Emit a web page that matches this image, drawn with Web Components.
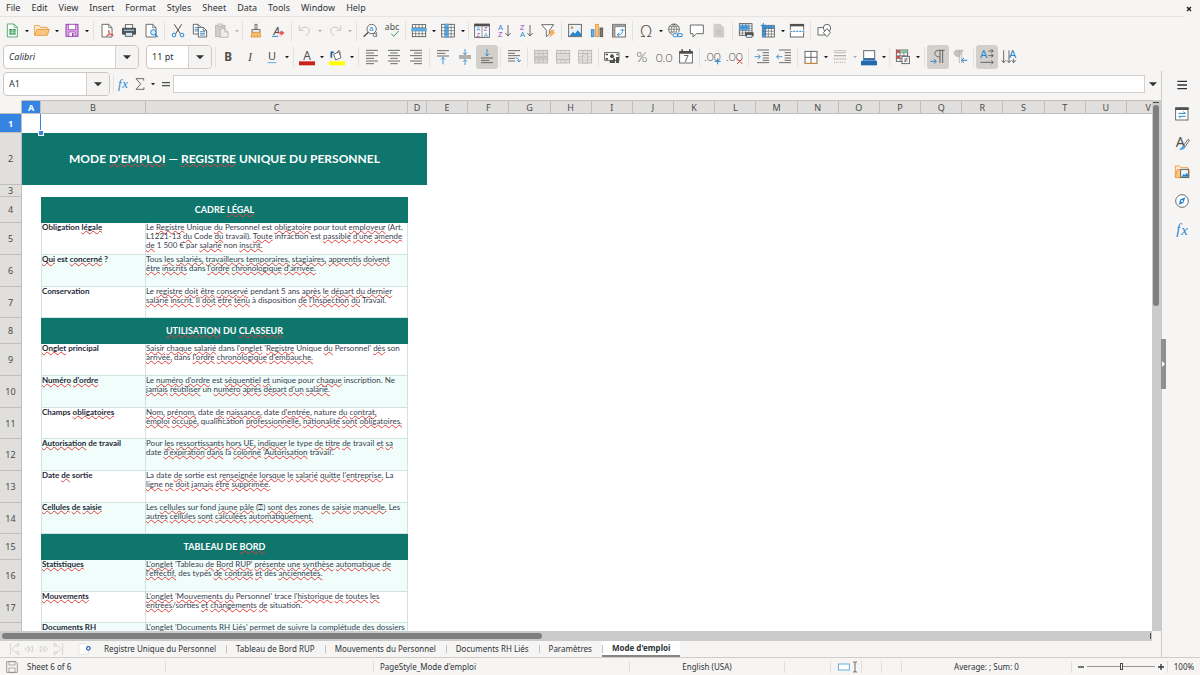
<!DOCTYPE html>
<html lang="en">
<head>
<meta charset="utf-8">
<title>Mode d'emploi — Calc</title>
<style>
  html, body { margin: 0; height: 100%; }
  body { font: 8px/12px "Noto Sans", sans-serif; color: #2e3436; background: #f6f5f4; overflow: hidden; }
</style>
</head>
<body>
<calc-app></calc-app>
<script>
const D = '#4f4f4d', B = '#2a86cc', O = '#e8912d', G = '#3c9d5a', R = '#d94a4a', P = '#9b45b0', L = '#b5b3b0';
const rect = (x, y, w, h, fill = 'none', stroke = D, sw = 2.5) =>
  `<rect x="${x}" y="${y}" width="${w}" height="${h}" fill="${fill}" stroke="${stroke}" stroke-width="${sw}"/>`;
const line = (d, stroke = D, sw = 3, fill = 'none') => `<path d="${d}" fill="${fill}" stroke="${stroke}" stroke-width="${sw}"/>`;
const txt = (s, x, y, size, fill = D, extra = 'font-family="Noto Sans, sans-serif"') =>
  `<text x="${x}" y="${y}" font-size="${size}" fill="${fill}" text-anchor="middle" ${extra}>${s}</text>`;
const doc = (x, y, w, h, stroke = D, fill = '#fff') =>
  line(`M${x} ${y}H${x + w - 10}L${x + w} ${y + 10}V${y + h}H${x}Z`, stroke, 2.5, fill) +
  line(`M${x + w - 10} ${y}V${y + 10}H${x + w}`, stroke, 2);
const table = (x, y, w, h, c, r, stroke = D, fill = '#fff') => {
  let d = '';
  for (let i = 1; i < c; i++) d += `M${x + w * i / c} ${y}V${y + h}`;
  for (let i = 1; i < r; i++) d += `M${x} ${y + h * i / r}H${x + w}`;
  return rect(x, y, w, h, fill, stroke, 2.5) + line(d, stroke, 1.8);
};
const rows = (ys, x1 = -18, x2 = 18, stroke = D) => line(ys.map(y => `M${x1} ${y}H${x2}`).join(''), stroke, 2.5);
const alignLines = (pairs) => line(pairs.map(([a, b], i) => `M${a} ${-20 + i * 8}H${b}`).join(''), D, 2.5);
const stack = (parts, size) => `<text font-size="${size}" text-anchor="middle" font-family="Liberation Sans, sans-serif">${parts.map(([s, x, y, c]) => `<tspan x="${x}" y="${y}" fill="${c}">${s}</tspan>`).join('')}</text>`;
const light = 'font-family="Lato, sans-serif" font-weight="300"';
const serif = 'font-family="Liberation Serif, serif" font-style="italic"';

const ICONS = {
  new: doc(-14, -21, 30, 39, G) + `<path d="M-8-6H11V11H-8Z" fill="${G}"/>` + line('M-8 0H11M-8 5H11M2-6V11', '#fff', 1.5),
  open: line('M-22 13V-16H-8L-4-11H15V-4', O, 2.5, '#fdf0dc') + line('M-22 13L-15-5H22L16 13Z', O, 2.5, '#f9c583'),
  save: rect(-18, -20, 36, 36, '#d9a3e3', P, 3) + rect(-11, -20, 22, 15, '#fff', P, 2) + rect(-9, 3, 18, 13, '#fff', P, 2) + `<path d="M0 6H5V16H0Z" fill="${P}"/>`,
  pdf: doc(-15, -20, 30, 38) + line('M-2 16C8 8 8-2 5-2C2-2 6 10 18 13C22 8 4 10-2 16Z', R, 3),
  print: rect(-11, -19, 22, 12, '#fff') + `<rect x="-21" y="-10" width="42" height="21" rx="3" fill="#55534f"/><path d="M-15-4H15V0H-15Z" fill="#8bc1ea"/>` + rect(-11, 4, 22, 12, '#cfe6f8'),
  preview: doc(-15, -20, 30, 38) + '<circle cx="7" cy="4" r="8" fill="#d5eafa" stroke="#2a86cc" stroke-width="3"/>' + line('M12 10L20 18', B, 4),
  cut: line('M-11-20L7 8M11-20L-7 8', D, 3) + `<circle cx="-12" cy="12" r="5.500" fill="none" stroke="${B}" stroke-width="3"/><circle cx="12" cy="12" r="5.500" fill="none" stroke="${B}" stroke-width="3"/>`,
  copy: doc(-20, -20, 24, 29) + rows([-10, -5, 0], -16, -2, B) + doc(-5, -11, 25, 29) + rows([2, 7, 12], 0, 15, B),
  paste: rect(-19, -17, 28, 34, '#cfcecc', L) + rect(-12, -21, 14, 7, '#dedddb', L, 2) + doc(-5, -7, 23, 26, L, '#ededeb'),
  clone: line('M-3-20H3V-4H-3Z', D, 2.5, '#fff') + rect(-12, -4, 24, 8, '#fff', D, 2.5) + line('M-12 4L-15 18H14L12 4Z', O, 2.5, '#f9c583') + line('M-5 8V18M4 8V18', O, 2),
  clear: txt('A', -4, 11, 34, D, 'font-family="Noto Sans, sans-serif" font-style="italic"') + line('M-18 16H0', B, 3) + line('M-2 12L10 0L18 5L6 17Z', R, 2, '#e65a5a') + line('M-4 12L2 7L10 13L6 18Z', '#fff', 1, '#fbe3e3'),
  undo: line('M-17-16V-2H-4M-16-3C-8-15 12-14 13-3C14 5 8 11 2 15', '#c3c1be', 2.5),
  redo: line('M17-16V-2H4M16-3C8-15-12-14-13-3C-14 5-8 11-2 15', '#c3c1be', 2.5),
  find: `<circle cx="5" cy="-6" r="14" fill="#fff" stroke="${D}" stroke-width="2.500"/>` + line('M-5 4L-19 17', D, 4) + stack([['a', 4, 0, B], ['d', 15, 19, D]], 24),
  spell: txt('abc', 0, -4, 26, D) + line('M-2 8L5 16L20 0', G, 3),
  row: table(-20, -19, 40, 36, 4, 4) + `<path d="M-23-9H23V1H-23Z" fill="#5ea9df"/>`,
  column: table(-19, -20, 38, 38, 4, 4) + `<path d="M-10-22H2V20H-10Z" fill="#5ea9df"/>` + line('M-10-10H2M-10 0H2M-10 9H2', '#2c6fa8', 1.5),
  sort: rect(-22, -20, 44, 39, '#fff') + `<path d="M-23-22H23V-14H-23Z" fill="${D}"/>` + line('M0-14V19', D, 2) + stack([['A', -11, 1, B], ['Z', -11, 17, P], ['Z', 11, 1, P], ['A', 11, 17, B]], 18),
  az: stack([['A', -11, -3, B], ['Z', -11, 18, P]], 22) + line('M12-18V14M4 6L12 15L20 6', D, 2.5),
  za: stack([['Z', -11, -3, P], ['A', -11, 18, B]], 22) + line('M12-18V14M4 6L12 15L20 6', D, 2.5),
  filter: line('M-19-19H17L4-2V9L-5 17V-2Z', D, 2.5, '#fff') + line('M9-2H18L14 5H20L5 18L9 8H4Z', O, 1.5, '#f9b25c'),
  image: rect(-19, -20, 38, 37, '#e9f4fc', D, 2.5) + `<circle cx="-9" cy="-10" r="4" fill="${O}"/><path d="M-17 15L-6 2L0 8L8-2L18 8V15Z" fill="${B}"/>`,
  chart: rect(-17, -4, 8, 21, '#6fb3e6', B, 2.5) + rect(-4, -20, 8, 37, '#f9c583', O, 2.5) + rect(9, -9, 8, 26, '#7d7b78', D, 2.5),
  pivot: rect(-19, -20, 38, 38, '#fff') + '<path d="M-18-19H18V-13H-18ZM-18-19H-12V17H-18Z" fill="#a9a7a4"/>' + line('M-12-13V17M-12-13H18', D, 1.5) + line('M-5 11H3C9 9 11 3 10-4M-5 11L1 5M-5 11L1 17M10-6L4 0M10-6L16 0', B, 2.5),
  omega: txt('Ω', 0, 18, 48, D, 'font-family="Noto Sans, sans-serif" font-weight="300"'),
  link: `<circle cx="-3" cy="-5" r="16" fill="#fff" stroke="${D}" stroke-width="2.500"/>` + line('M-19-5H13M-16-13H10M-16 3H5M-3-21V11M-3-21C-14-12-14 2-3 11M-3-21C8-12 8 2-3 11', D, 1.8) + '<rect x="-8" y="5" width="31" height="14" fill="#f6f5f4"/>' + `<rect x="-6" y="8" width="15" height="9" rx="4" fill="none" stroke="${B}" stroke-width="3"/><rect x="7" y="8" width="15" height="9" rx="4" fill="none" stroke="${B}" stroke-width="3"/>`,
  comment: line('M-20-18H19V8H-2L-12 18V8H-20Z', D, 2.5, '#fff'),
  header: doc(-15, -20, 29, 38, '#c9c7c4', '#d2d0cd') + rows([-3, 3, 9], -9, 8, '#bbb9b6'),
  printarea: table(-20, -22, 38, 35, 4, 5) + '<path d="M-20-19H10V-2H-20Z" fill="#5ea9df"/>' + line('M-10-19V-2M0-19V-2M-20-11H10', '#2c6fa8', 1.5) + '<rect x="-3" y="4" width="26" height="12" rx="2" fill="#55534f"/>' + rect(2, 11, 16, 8, '#cfe6f8', D, 2),
  freeze: table(-17, -17, 36, 35, 4, 4) + '<path d="M-17-17H-7V18H-17ZM-17-17H19V-8H-17Z" fill="#4b9ad6"/>' + line('M-17-8H19M-7-17V18M-17 1H-7M-17 9H-7M2-17V-8M10-17V-8', '#1f5e93', 1.5) + line('M-14-24V-10M-22-17H-7', B, 3),
  split: rect(-20, -20, 40, 38, '#fff') + `<path d="M-21-21H21V-14H-21Z" fill="${D}"/>` + '<path d="M-22-3H22V4H-22Z" fill="#f6f5f4"/>' + line('M-20 1H22', B, 3).replace('/>', ' stroke-dasharray="6 3"/>'),
  shapes: rect(-18, -10, 22, 22, '#fff', D, 2.5) + `<circle cx="9" cy="-9" r="11" fill="#fff" stroke="${D}" stroke-width="2.500"/>` + line('M9-7L19 5L9 17L-2 5Z', D, 2.5, '#fff'),

  bold: txt('B', 0, 13, 35, D, 'font-family="Noto Sans, sans-serif" font-weight="700"'),
  italic: txt('I', 0, 13, 37, D, serif),
  underline: txt('U', 0, 10, 33, D) + line('M-13 17H13', '#5ea9df', 3),
  fontcolor: txt('A', 0, 8, 36, D) + '<path d="M-24 13H24V25H-24Z" fill="#c9211e"/>',
  fill: line('M-10-8L6-16L12 2L-4 9Z', D, 2.5, '#fff') + line('M0-12C4-24 11-22 9-6', D, 2) + line('M-10-14H-17V2', '#1f5e93', 5) + '<path d="M-24 13H24V25H-24Z" fill="#ffff00"/>',
  left: alignLines([[-18, 18], [-18, 6], [-18, 18], [-18, 6], [-18, 18], [-18, 6]]),
  center: alignLines([[-18, 18], [-11, 11], [-18, 18], [-11, 11], [-18, 18], [-11, 11]]),
  right: alignLines([[-18, 18], [-6, 18], [-18, 18], [-6, 18], [-18, 18], [-6, 18]]),
  top: rows([-19]) + rows([-11], -18, 7) + rows([-3], -18, 18) + line('M0 22V1M-6 8L0 1L6 8', B, 2.5),
  middle: rows([-3, 3]) + line('M0-24V-7M-6-13L0-7L6-13M0 24V8M-6 14L0 8L6 14', B, 2.5),
  bottom: rows([3, 17]) + rows([10], -18, 7) + line('M0-24V-3M-6-10L0-3L6-10', B, 2.5),
  wrap: rows([-19, -4]) + rows([-11, 4, 12], -18, 3) + line('M5 3C13 3 15 7 15 14M9 9L15 15L21 9', B, 2.5),
  merge: table(-19, -20, 39, 38, 3, 4, L, '#dedcda') + '<path d="M-18-3H19V5H-18Z" fill="#c6c4c1"/>',
  mergeh: table(-19, -20, 39, 38, 3, 4, L, '#e6e4e2') + rect(-19, -10, 39, 18, '#dedcda', L, 2),
  mergev: table(-19, -20, 39, 38, 3, 4, L, '#e6e4e2') + rect(-7, -10, 15, 28, '#dedcda', L, 2),
  currency: rect(-22, -13, 43, 23, '#fff', D, 2.5) + `<circle cx="0" cy="-2" r="6" fill="${D}"/><path d="M-19-10H-12V-5H-19ZM13-10H19V-5H13ZM-19 3H-12V8H-19ZM3 4H9V18H-7V10H3ZM12 0H21V18H12Z" fill="${D}"/>`,
  percent: txt('%', 0, 15, 42, D, light),
  number: txt('0.0', 0, 14, 36, D, light),
  date: rect(-19, -16, 38, 34, '#fff') + `<path d="M-20-18H20V-10H-20ZM-14-23H-9V-15H-14ZM9-23H14V-15H9Z" fill="${D}"/>` + txt('7', 0, 14, 27, D),
  adddec: txt('.00', -2, 12, 36, D, light) + line('M14 4V22M5 13H23', B, 3),
  deldec: txt('.00', -2, 12, 36, D, light) + line('M6 5L22 21M22 5L6 21', R, 3),
  indent: rows([-21, 17], -15, 21) + rows([-13, -5, 3, 10], 2, 21) + line('M-22-1H-6M-12-8L-5-1L-12 6', B, 2.5),
  outdent: rows([-21, 17], -15, 21) + rows([-13, -5, 3, 10], 2, 21) + line('M-22-1H-5M-16-8L-22-1L-16 6', B, 2.5),
  border: rect(-18, -17, 36, 36, '#fff') + line('M0-17V19M-18 1H18', D, 2.5) + line('M-20 19H20', O, 2.5),
  linestyle: rows([-19, -13], -18, 18, L) + line('M-18-4H18', L, 4) + line('M-18 6H18', L, 4).replace('/>', ' stroke-dasharray="5 3"/>') + line('M-18 16H18', L, 3).replace('/>', ' stroke-dasharray="3 3"/>'),
  linecolor: rect(-16, -19, 33, 24, '#fff', '#6a6a68', 3) + line('M-19 10L-13 5H14L20 10Z', '#2a6db5', 2, '#2a6db5') + '<path d="M-24 12H24V25H-24Z" fill="#2468ae"/>',
  cond: table(-20, -21, 34, 34, 3, 4) + `<path d="M-19-20H-9V-13H-19ZM-19-3H-9V4H-19Z" fill="${R}"/><path d="M-8-20H13V-13H-8Z" fill="#7fc796"/>` + rect(-3, -2, 22, 22, '#fff') + line('M3 6H14M3 12H14M12 2L5 16', D, 2),
  ltr: line('M6-20V18M14-20V18M20-20H2C-14-20-14 0 6 0', D, 2.5) + line('M-22 13H-6M-12 6L-5 13L-12 20', B, 3),
  rtl: line('M-2-20V18M5-20V18M10-20H-8C-22-20-22-1-2-1', L, 2.5, '#c6c4c1') + line('M22 10H6M12 3L5 10L12 17', B, 3),
  horiz: txt('A', -10, 4, 34, B) + line('M4-18H18M13-23L19-18L13-13M4-4H18M13-9L19-4L13 1M-20 16H18M13 11L19 16L13 21', D, 2.5),
  vert: txt('A', 11, 4, 34, B) + line('M-16-20V16M-22 10L-16 17L-10 10M0-20V16M-6 10L0 17L6 10M14 5V16M8 10L14 17L20 10', D, 2.5),

  fx: txt('<tspan>f</tspan><tspan dx="2" dy="2">x</tspan>', 0, 11, 38, B, serif),
  sum: line('M11-10V-16H-12L2 0L-12 16H12V10', D, 2.5),
  equal: line('M-12-4H12M-12 5H12', D, 4),
  menu: line('M-14-11H15M-14 0H15M-14 11H15', '#2e3436', 4),
  props: rect(-19, -18, 37, 36, '#fff') + `<path d="M-20-20H20V-12H-20Z" fill="${D}"/>` + line('M-11-2H10M4-7L10-2M11 7H-10M-4 12L-10 7', B, 3),
  styles: txt('A', -5, 11, 43, D) + line('M5 7L18-11L22-8L10 10Z', D, 2.5, '#fff') + line('M-7 19C0 19-1 8 6 8C12 12 8 20-7 19Z', B, 2, '#5ea9df'),
  gallery: line('M-20 17V-18H-8L-4-13H18V-8', O, 2.5, '#fdf0dc') + line('M-20 17L-15-7H21V17Z', O, 2.5, '#f9c583') + rect(-4, -8, 24, 24, '#e9f4fc', D, 2.5) + '<path d="M-2 14L5 6L9 9L14 3L19 8V14Z" fill="#2a86cc"/>',
  navigator: `<circle r="19" fill="#fff" stroke="${D}" stroke-width="2.500"/><path d="M10-11L4 6L-10 11L-5-5Z" fill="${B}"/><circle r="3" fill="#fff"/>`,
  function: txt('<tspan>f</tspan><tspan dx="3" dy="4">x</tspan>', 0, 12, 44, B, serif),
  caret: '<path d="M-6-3H6L0 4Z" fill="#1e1e1e"/>',
  caretoff: '<path d="M-6-3H6L0 4Z" fill="#b5b3b0"/>',
  bigcaret: '<path d="M-12-5H12L0 7Z" fill="#2e3436"/>',
  docsave: line('M-16-16H12L16-12V16H-16Z', '#8a8886', 2.5) + rect(-9, -16, 18, 10, 'none', '#8a8886', 2) + rect(-9, 3, 18, 13, 'none', '#8a8886', 2),
  first: line('M-11-18V18M14-18L-7 0L14 18V8H6M6-8H14V-18', '#c6c5c3', 2),
  prev: line('M-1-9L-12 0L-1 9ZM11-9L1 0L11 9Z', '#c6c5c3', 2),
  next: line('M1-9L12 0L1 9ZM-11-9L-1 0L-11 9Z', '#c6c5c3', 2),
  last: line('M11-18V18M-14-18L7 0L-14 18V8H-6M-6-8H-14V-18', '#c6c5c3', 2),
  addsheet: line('M-15-16H3L13-6V16H-15Z', '#dddbd9', 2, '#fff') + `<circle cx="13" cy="-2" r="7" fill="#2b62b5"/>` + line('M13-6V2M9-2H17', '#fff', 2.5),
  select: rect(-17, -9, 33, 18, '#fff', '#4b9fd4', 2.5),
  ibeam: line('M-6-15H-1L0-13L1-15H6M-6 15H-1L0 13L1 15H6M0-13V13', D, 2.5),
  minus: line('M-9 0H9', '#2e3436', 4),
  plus: line('M-9 0H9M0-9V9', '#2e3436', 4),
  close: line('M-6-6L6 6M6-6L-6 6', '#1e1e1e', 4)
};

class El extends HTMLElement {
  connectedCallback() {
    if (this.shadowRoot) return;
    const t = document.createElement('template');
    t.innerHTML = `<style>*{box-sizing:border-box}button{appearance:none;border:0;margin:0;padding:0;background:none;font:inherit;color:inherit}input{font:inherit;color:inherit;margin:0;outline:0;min-width:0}${this.css()}</style>${this.html()}`;
    this.attachShadow({ mode: 'open' }).append(t.content.cloneNode(true));
  }
  css() { return ''; }
  html() { return ''; }
}
const define = (name, cls) => customElements.define(name, cls);

define('calc-icon', class extends El {
  css() { return ':host{display:block;width:18px;height:18px;flex:none}svg{display:block}'; }
  html() { return `<svg width="18" height="18" viewBox="-27 -27 54 54" aria-hidden="true">${ICONS[this.getAttribute('name')]}</svg>`; }
});

define('tool-button', class extends El {
  css() {
    return `:host{display:flex;flex:none}
    button{width:22px;height:24px;border-radius:3px;display:grid;place-items:center}
    button[aria-pressed=true]{background:#d3d0cc}
    .drop{width:var(--caret,7px);border-radius:0;overflow:hidden;justify-content:center}`;
  }
  html() {
    const n = this.getAttribute('icon'), label = this.getAttribute('label') || n;
    const drop = this.getAttribute('drop');
    return `<button aria-label="${label}" aria-pressed="${this.hasAttribute('pressed')}"><calc-icon name="${n}"></calc-icon></button>` +
      (drop ? `<button class="drop" aria-label="${label} options"><calc-icon name="${drop === 'off' ? 'caretoff' : 'caret'}"></calc-icon></button>` : '');
  }
});

define('tool-group', class extends El {
  css() { return `:host{display:flex;align-items:center;flex:none}:host([wide]){--caret:8px}i{width:1px;height:20px;margin:0 2px;background:#e4e2df}:host([last]) i{display:none}`; }
  html() { return '<slot></slot><i></i>'; }
});

define('combo-box', class extends El {
  css() {
    return `:host{display:flex;box-sizing:border-box;height:24px;flex:none;border:1px solid #cdc7c2;border-radius:4px;background:#fff;overflow:hidden}
    input{flex:1;border:0;background:none;padding:0 5px;font-size:9px}
    :host([italic]) input{font-style:italic}
    button{width:23px;border-left:1px solid #d5d1cd;background:#f4f3f2;display:grid;place-items:center}`;
  }
  html() {
    const l = this.getAttribute('label');
    return `<input aria-label="${l}" value="${this.getAttribute('value')}"><button aria-label="${l} list"><calc-icon name="bigcaret"></calc-icon></button>`;
  }
});

define('menu-bar', class extends El {
  css() {
    return `:host{display:flex;align-items:center;box-sizing:border-box;height:17px;border-bottom:1px solid #e6e4e2;margin-right:16px;position:relative}
    nav{display:flex;flex:1;gap:1px;padding-left:1px}button{padding:0 5px;height:16px;line-height:16px;font-size:9px}
    .close{position:absolute;right:-14px;top:0;padding:0}`;
  }
  html() {
    return `<nav>${'File Edit View Insert Format Styles Sheet Data Tools Window Help'.split(' ').map(m => `<button>${m}</button>`).join('')}</nav><button class="close" aria-label="Close document"><calc-icon name="close"></calc-icon></button>`;
  }
});

/* A toolbar entry is "icon", "icon:on" (with a menu), "icon:off" (menu disabled) or "icon!" (pressed). */
const group = (spec, attrs = '') => `<tool-group ${attrs}>${spec.split(' ').map(s => {
  const [n, drop] = s.replace('!', '').split(':');
  return `<tool-button icon="${n}" ${drop ? `drop="${drop}"` : ''} ${s.endsWith('!') ? 'pressed' : ''}></tool-button>`;
}).join('')}</tool-group>`;

define('standard-toolbar', class extends El {
  css() { return ':host{display:flex;align-items:center;height:27px;padding-left:1px}'; }
  html() {
    return group('new:on open:on save:on', 'wide') + group('pdf print preview') + group('cut copy paste:off') + group('clone clear') +
      group('undo:off redo:off', 'wide') + group('find spell') + group('row:on column:on') + group('sort az za filter') +
      group('image chart pivot') + group('omega:on link comment header') + group('printarea freeze:on split') + group('shapes', 'last');
  }
});

define('format-toolbar', class extends El {
  css() { return `:host{display:flex;align-items:center;box-sizing:border-box;height:27px;padding:0 0 1px 3px}.font{width:136px;margin-right:7px}.size{width:66px}i{width:1px;height:20px;margin:0 1px 0 3px;background:#e4e2df}`; }
  html() {
    return `<combo-box class="font" italic label="Font name" value="Calibri"></combo-box><combo-box class="size" label="Font size" value="11 pt"></combo-box><i></i>` +
      group('bold italic underline:on', 'wide') + group('fontcolor:on fill:on', 'wide') + group('left center right') + group('top middle bottom!') + group('wrap') +
      group('merge mergeh mergev') + group('currency:on percent number date', 'wide') + group('adddec deldec') + group('indent outdent') +
      group('border:on linestyle:off linecolor:on') + group('cond:on', 'wide') + group('ltr! rtl') + group('horiz! vert', 'last');
  }
});

define('formula-bar', class extends El {
  css() {
    return `:host{display:flex;align-items:center;box-sizing:border-box;height:29px;padding:0 0 3px 3px}
    combo-box{width:107px;margin-right:3px}i{width:1px;height:18px;background:#e4e2df}
    button{height:22px;width:15px;display:grid;place-items:center;overflow:hidden;justify-content:center}
    .fx{width:18px}.c{width:11px}.eq{width:15px}
    input{flex:1;height:18px;border:1px solid #d5d1cd;background:#fff;padding:0 4px}
    .x{width:16px}`;
  }
  html() {
    return `<combo-box label="Name box" value="A1"></combo-box><i></i>
    <button class="fx" aria-label="Function wizard"><calc-icon name="fx"></calc-icon></button>
    <button aria-label="Sum"><calc-icon name="sum"></calc-icon></button>
    <button class="c" aria-label="Sum options"><calc-icon name="caret"></calc-icon></button>
    <button class="eq" aria-label="Formula"><calc-icon name="equal"></calc-icon></button>
    <input aria-label="Formula input"><button class="x" aria-label="Expand formula bar"><calc-icon name="bigcaret"></calc-icon></button>`;
  }
});

const SHEET = [
  { h: 19, type: 'cursor' },
  { h: 52, type: 'title', text: "MODE ~D'EMPLOI~ — ~REGISTRE~ UNIQUE DU PERSONNEL" },
  { h: 12, type: 'empty' },
  { h: 26, type: 'section', text: 'CADRE ~LÉGAL~' },
  { h: 32, k: 'Obligation ~légale~', v: "Le ~Registre~ Unique ~du~ Personnel est ~obligatoire~ pour tout ~employeur~ (Art.|L1221-13 ~du~ Code ~du~ travail). ~Toute~ infraction est ~passible~ ~d'une~ ~amende~|~de~ 1 500 € par ~salarié~ non ~inscrit.~" },
  { h: 32, alt: 1, k: '~Qui~ est ~concerné~ ?', v: "Tous ~les~ ~salariés,~ ~travailleurs~ ~temporaires,~ ~stagiaires,~ ~apprentis~ ~doivent~|~être~ ~inscrits~ dans ~l'ordre~ ~chronologique~ ~d'arrivée.~" },
  { h: 31, k: 'Conservation', v: "Le ~registre~ ~doit~ ~être~ ~conservé~ pendant 5 ans ~après~ ~le~ ~départ~ ~du~ ~dernier~|~salarié~ ~inscrit.~ ~Il~ ~doit~ ~être~ ~tenu~ à disposition ~de~ ~l'Inspection~ ~du~ Travail." },
  { h: 26, type: 'section', text: '~UTILISATION~ DU ~CLASSEUR~' },
  { h: 32, k: '~Onglet~ principal', v: "~Saisir~ ~chaque~ ~salarié~ dans ~l'onglet~ '~Registre~ Unique ~du~ Personnel' ~dès~ son|~arrivée,~ dans ~l'ordre~ ~chronologique~ ~d'embauche.~" },
  { h: 32, alt: 1, k: "~Numéro~ ~d'ordre~", v: "Le ~numéro~ ~d'ordre~ est ~séquentiel~ ~et~ unique pour ~chaque~ inscription. Ne|~jamais~ ~réutiliser~ un ~numéro~ ~après~ ~départ~ ~d'un~ ~salarié.~" },
  { h: 31, k: 'Champs ~obligatoires~', v: "~Nom,~ ~prénom,~ date ~de~ ~naissance,~ date ~d'entrée,~ nature ~du~ ~contrat,~|~emploi~ ~occupé,~ qualification ~professionnelle,~ ~nationalité~ ~sont~ ~obligatoires.~" },
  { h: 32, alt: 1, k: '~Autorisation~ de travail', v: "Pour ~les~ ~ressortissants~ ~hors~ ~UE,~ ~indiquer~ le type ~de~ ~titre~ ~de~ travail ~et~ ~sa~|date ~d'expiration~ ~dans~ la ~colonne~ '~Autorisation~ travail'." },
  { h: 32, k: 'Date ~de~ sortie', v: "La date ~de~ sortie est ~renseignée~ ~lorsque~ ~le~ ~salarié~ ~quitte~ ~l'entreprise.~ La|~ligne~ ~ne~ ~doit~ ~jamais~ ~être~ ~supprimée.~" },
  { h: 31, alt: 1, k: '~Cellules~ ~de~ ~saisie~', v: 'Les ~cellules~ sur fond ~jaune~ ~pâle~ (⍰) ~sont~ ~des~ zones ~de~ ~saisie~ ~manuelle.~ Les|~autres~ ~cellules~ ~sont~ ~calculées~ ~automatiquement.~' },
  { h: 26, type: 'section', text: 'TABLEAU DE ~BORD~' },
  { h: 32, alt: 1, k: '~Statistiques~', v: "~L'onglet~ 'Tableau ~de~ ~Bord~ ~RUP'~ ~présente~ ~une~ ~synthèse~ ~automatique~ ~de~|~l'effectif,~ des types ~de~ ~contrats~ ~et~ des ~anciennetés.~" },
  { h: 31, k: '~Mouvements~', v: "~L'onglet~ '~Mouvements~ ~du~ Personnel' trace ~l'historique~ ~de~ ~toutes~ ~les~|~entrées~/sorties ~et~ ~changements~ ~de~ situation." },
  { h: 32, alt: 1, k: 'Documents RH', v: "~L'onglet~ 'Documents RH ~Liés~' ~permet~ ~de~ ~suivre~ la ~complétude~ ~des~ dossiers" }
];
const mark = s => s.replace(/~([^~]+)~/g, '<u>$1</u>').replace(/\|/g, '<br>');

define('sheet-grid', class extends El {
  css() {
    return `:host{display:block;overflow:hidden;background:#fff;min-width:0}
    table{width:100%;table-layout:fixed;border-collapse:separate;border-spacing:0}
    th,td{padding:0;overflow:hidden}
    th{font-weight:400;font-size:9px;line-height:11px;color:#4a4a48;background:#e0dfde;text-align:center}
    thead th{height:14px;border-right:1px solid #bfbebc;border-bottom:1px solid #bfbebc;border-top:1px solid #bfbebc}
    thead th:first-child{background:#f6f5f4;border-top-color:#f6f5f4}
    thead th:last-child{text-align:right;padding-right:1px;border-right:0}
    tbody th{border-right:1px solid #bfbebc;border-bottom:1px solid #bfbebc}
    th.on{background:#3584e4;color:#fff;font-weight:700}
    .r{width:22px}.a{width:19px}.b{width:105px}.c{width:262px}.end{width:25px}
    td{font:8px/9px Lato,sans-serif;color:#37414f;white-space:nowrap;vertical-align:top}
    .k,.v{border-right:1px solid #d0e3e2;border-bottom:1px solid #d0e3e2}
    .k{font-weight:700;color:#1f2937;border-left:1px solid #d0e3e2}
    .alt .k,.alt .v{background:#f0fdfa}
    .title,.section{background:#0f766e;color:#fff;font-weight:700;text-align:center;vertical-align:middle}
    .title{font-size:12px;line-height:18px}.section{font-size:9px;line-height:12px}
    .cur{position:relative;overflow:visible;border-right:1px solid #3584e4}
    .cur i{position:absolute;right:-3px;bottom:-2px;width:4px;height:4px;background:#3584e4;outline:1px solid #fff}
    u{text-decoration:underline wavy #e0403c 1px;text-underline-offset:0px;text-decoration-skip-ink:none}`;
  }
  html() {
    const letters = 'ABCDEFGHIJKLMNOPQRSTUV'.split('');
    const body = SHEET.map((r, i) => {
      const th = `<th scope="row" style="height:${r.h}px"${i ? '' : ' class="on"'}>${i + 1}</th>`;
      const c = r.type === 'cursor' ? '<td class="cur"><i></i></td><td colspan="21"></td>'
        : r.type === 'title' ? `<td class="title" colspan="4">${mark(r.text)}</td><td colspan="18"></td>`
        : r.type === 'section' ? `<td></td><td class="section" colspan="2">${mark(r.text)}</td><td colspan="19"></td>`
        : r.type === 'empty' ? '<td colspan="22"></td>'
        : `<td></td><td class="k">${mark(r.k)}</td><td class="v">${mark(r.v)}</td><td colspan="19"></td>`;
      return `<tr${r.alt ? ' class="alt"' : ''}>${th}${c}</tr>`;
    }).join('');
    return `<table><colgroup><col class="r"><col class="a"><col class="b"><col class="c"><col class="a">${'<col>'.repeat(17)}<col class="end"></colgroup>
    <thead><tr><th></th>${letters.map((l, i) => `<th scope="col"${i ? '' : ' class="on"'}>${l}</th>`).join('')}</tr></thead><tbody>${body}</tbody></table>`;
  }
});

define('scroll-bar', class extends El {
  css() {
    return `:host{display:flex;box-sizing:border-box;background:#cbcbcb}
    :host([dir=v]){flex-direction:column;padding:2px 2px 0 1px;width:9px}
    :host([dir=h]){height:10px;padding:2px 1px 2px 2px;margin-right:9px}
    b{background:#7f7f7f;border-radius:3px}i{background:#4a4a48}
    :host([dir=v]) b{height:38%;width:6px}:host([dir=v]) i{height:1px;margin-bottom:2px}
    :host([dir=h]) b{width:47%}:host([dir=h]) i{width:1px;margin-left:auto}`;
  }
  html() { return this.getAttribute('dir') === 'v' ? '<i></i><b></b>' : '<b></b><i></i>'; }
});

define('sheet-tabs', class extends El {
  css() {
    return `:host{display:flex;align-items:center;box-sizing:border-box;height:17px;border-bottom:1px solid #cfccc9}
    .nav{display:flex;padding-left:6px;margin-right:9px}.nav button{width:15px;display:grid;place-items:center;justify-content:center}
    .add{margin-right:1px}
    .tab{height:16px;line-height:14px;padding:0 10px;position:relative}
    .tab + .tab::before{content:"";position:absolute;left:0;top:4px;height:8px;width:1px;background:#c4c1be}
    .tab[aria-selected=true]{background:#fff;font-weight:700;border-bottom:2px solid #858585}`;
  }
  html() {
    const tabs = ['Registre Unique du Personnel', 'Tableau de Bord RUP', 'Mouvements du Personnel', 'Documents RH Liés', 'Paramètres', "Mode d'emploi"];
    return `<div class="nav">${['first', 'prev', 'next', 'last'].map(n => `<button aria-label="${n} sheet"><calc-icon name="${n}"></calc-icon></button>`).join('')}</div>
    <button class="add" aria-label="Add sheet"><calc-icon name="addsheet"></calc-icon></button>
    <div role="tablist" style="display:flex">${tabs.map((t, i) => `<button class="tab" role="tab" aria-selected="${i === 5}">${t}</button>`).join('')}</div>`;
  }
});

define('side-bar', class extends El {
  css() {
    return `:host{display:flex;flex-direction:column;align-items:center;box-sizing:border-box;width:39px;border-left:1px solid #cbc8c5;position:relative;padding:2px 0 0 2px;border-bottom:1px solid #cfccc9}
    button{width:24px;height:24px;display:grid;place-items:center;margin-bottom:5px}
    .grip{position:absolute;left:-1px;top:268px;width:5px;height:50px;margin:0;background:#8f8f8f}
    .grip svg{display:block}`;
  }
  html() {
    return ['menu', 'props', 'styles', 'gallery', 'navigator', 'function'].map(n => `<button aria-label="${n}"><calc-icon name="${n}"></calc-icon></button>`).join('') +
      '<button class="grip" aria-label="Hide sidebar"><svg width="5" height="6"><path d="M1 0L4 3L1 6Z" fill="#fff"/></svg></button>';
  }
});

define('status-bar', class extends El {
  css() {
    return `:host{display:grid;grid-template-columns:165fr 208fr 256fr 155fr 46fr 31fr 20fr 20fr 170fr 96fr 33fr;align-items:center;height:17px}
    div{display:flex;align-items:center;height:12px;white-space:nowrap;min-width:0}
    div + div{border-left:1px solid #e1dfdc}.c{justify-content:center}
    .save{padding-left:3px;gap:6px}.page{padding-left:6px}.sel{padding-left:4px}
    .z{padding-left:3px}.z button{width:12px;display:grid;place-items:center;justify-content:center;overflow:hidden}
    input{appearance:none;flex:1;height:12px;background:linear-gradient(#9a9896,#9a9896) center/100% 1px no-repeat}
    input::-webkit-slider-thumb{appearance:none;width:3px;height:7px;border:1px solid #4a4a48;background:#fff}
    calc-icon + calc-icon{margin-left:-7px}`;
  }
  html() {
    return `<div class="save"><calc-icon name="docsave"></calc-icon>Sheet 6 of 6</div><div></div><div class="page">PageStyle_Mode d'emploi</div><div class="c">English (USA)</div><div></div>
    <div class="sel"><calc-icon name="select"></calc-icon><calc-icon name="ibeam"></calc-icon></div><div></div><div></div><div class="c">Average: ; Sum: 0</div>
    <div class="z"><button aria-label="Zoom out"><calc-icon name="minus"></calc-icon></button><input type="range" aria-label="Zoom" value="50"><button aria-label="Zoom in"><calc-icon name="plus"></calc-icon></button></div><div class="c">100%</div>`;
  }
});

define('calc-app', class extends El {
  css() {
    return `:host{display:flex;flex-direction:column;height:100vh;overflow:hidden}
    .work{display:flex;flex:1;min-height:0}.main{display:flex;flex-direction:column;flex:1;min-width:0}
    .view{display:flex;flex:1;min-height:0}sheet-grid{flex:1}`;
  }
  html() {
    return `<menu-bar></menu-bar><standard-toolbar></standard-toolbar><format-toolbar></format-toolbar>
    <div class="work"><div class="main"><formula-bar></formula-bar><div class="view"><sheet-grid></sheet-grid><scroll-bar dir="v"></scroll-bar></div><scroll-bar dir="h"></scroll-bar><sheet-tabs></sheet-tabs></div><side-bar></side-bar></div>
    <status-bar></status-bar>`;
  }
});
</script>
</body>
</html>
